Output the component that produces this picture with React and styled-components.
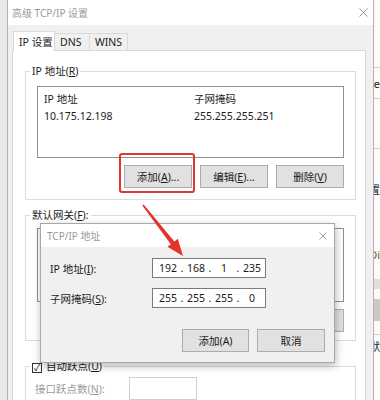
import React from 'react';
import styled, { createGlobalStyle } from 'styled-components';

const GlobalStyle = createGlobalStyle`
  body {
    margin: 0;
    background: #fff;
    font-family: 'Noto Sans', 'Noto Sans CJK SC', sans-serif;
    font-size: 10.5px;
    color: #1b1b1b;
  }
  * { box-sizing: border-box; }
`;

const Page = styled.div`
  position: relative;
  display: flex;
  width: 380px;
  height: 400px;
  overflow: hidden;
  background: #fff;
`;

const LeftEdge = styled.div`
  width: 7px;
  flex-shrink: 0;
  background: #e8e8e8;
`;

const Window = styled.div`
  width: 367px;
  flex-shrink: 0;
  display: flex;
  flex-direction: column;
  border-left: 1px solid #b4b4b4;
  border-right: 1px solid #b4b4b4;
`;

const TitleBar = styled.div`
  height: 25px;
  flex-shrink: 0;
  display: flex;
  align-items: center;
  justify-content: space-between;
  padding: 0 5px 0 4px;
  background: #fff;
  color: #9a9a9a;
  font-size: 10px;
`;

const WinBody = styled.div`
  flex: 1;
  background: #f0f0f0;
  padding: 6px 7px 0 4px;
`;

const Tabs = styled.div`
  display: flex;
  align-items: flex-end;
  padding-left: 1px;
  height: 19px;
`;

const Tab = styled.div`
  width: ${(p) => p.$w}px;
  height: ${(p) => (p.$active ? 20 : 17)}px;
  margin-bottom: ${(p) => (p.$active ? -1 : 0)}px;
  position: relative;
  z-index: ${(p) => (p.$active ? 1 : 0)};
  display: flex;
  align-items: center;
  padding-left: 5px;
  background: ${(p) => (p.$active ? '#fff' : '#f0f0f0')};
  border: 1px solid #d9d9d9;
  border-bottom: none;
  margin-left: ${(p) => (p.$active ? 0 : -1)}px;
`;

const TabPanel = styled.div`
  background: #fff;
  border: 1px solid #d9d9d9;
  padding: 13px 9px 0 12px;
  height: 360px;
`;

const Group = styled.fieldset`
  margin: ${(p) => p.$mt || 0}px 0 0 0;
  padding: ${(p) => p.$pt || 7}px 11px ${(p) => p.$pb || 8}px 11px;
  border: 1px solid #dcdcdc;
  min-width: 0;
`;

const Legend = styled.legend`
  margin-left: -7px;
  padding: 0 2px;
  line-height: 14px;
`;

const ListBox = styled.div`
  height: ${(p) => p.$h}px;
  border: 1px solid #8f8f8f;
  background: #fff;
  padding: 2px 0 0 6px;
`;

const ListRow = styled.div`
  display: grid;
  grid-template-columns: 150px 1fr;
  height: 18px;
  align-items: center;
`;

const ButtonRow = styled.div`
  display: flex;
  justify-content: flex-end;
  gap: 8px;
  margin-top: 7px;
`;

const Btn = styled.div`
  width: ${(p) => p.$w || 68}px;
  height: 23px;
  display: flex;
  align-items: center;
  justify-content: center;
  background: #e1e1e1;
  border: 1px solid #adadad;
  color: #1b1b1b;
`;

const Highlight = styled.div`
  position: relative;
  &::after {
    content: '';
    position: absolute;
    left: -5px;
    right: -3px;
    top: -12px;
    bottom: -5px;
    border: 2.5px solid #e0362b;
    border-radius: 3px;
  }
`;

const Check = styled.span`
  width: 10px;
  height: 10px;
  margin-right: 4px;
  border: 1px solid #333;
  display: inline-flex;
  align-items: center;
  justify-content: center;
  vertical-align: -1px;
  font-size: 9px;
  line-height: 1;
`;

const MetricRow = styled.div`
  display: flex;
  align-items: center;
  gap: 14px;
  margin-left: -2px;
`;

const Dim = styled.span`
  color: #9b9b9b;
  width: 80px;
`;

const SmallInput = styled.div`
  width: 68px;
  height: 23px;
  border: 1px solid #cfcfcf;
  background: #fff;
`;

const BackStrip = styled.div`
  flex: 1;
  display: flex;
  flex-direction: column;
  background: #fafafa;
  overflow: hidden;
  font-size: 11px;
  white-space: nowrap;
`;

const StripCell = styled.div`
  height: ${(p) => p.$h}px;
  flex-shrink: 0;
  border-bottom: ${(p) => (p.$line ? '1px solid #cfcfcf' : 'none')};
  background: ${(p) => p.$bg || 'transparent'};
  display: flex;
  align-items: center;
  justify-content: flex-end;
  color: ${(p) => p.$color || '#222'};
`;

const Arrow = styled.svg`
  position: absolute;
  left: 0;
  top: 0;
  pointer-events: none;
`;

const Dialog = styled.div`
  position: absolute;
  left: 40px;
  top: 223px;
  width: 295px;
  height: 140px;
  border: 1px solid #a8a8a8;
  background: #f0f0f0;
  box-shadow: 1px 3px 8px rgba(0, 0, 0, 0.28);
  display: flex;
  flex-direction: column;
`;

const DialogTitle = styled.div`
  height: 23px;
  background: #fff;
  display: flex;
  align-items: center;
  justify-content: space-between;
  padding: 0 7px 0 6px;
  color: #9a9a9a;
  font-size: 10px;
`;

const DialogBody = styled.div`
  padding: 11px 9px 0 9px;
  display: flex;
  flex-direction: column;
  gap: 10px;
`;

const FieldRow = styled.div`
  display: grid;
  grid-template-columns: 102px 114px;
  align-items: center;
`;

const IpBox = styled.div`
  height: 20px;
  border: 1px solid #7a7a7a;
  background: #fff;
  display: flex;
  align-items: center;
  padding-left: 4px;
`;

const IpPart = styled.span`
  width: 22px;
  text-align: center;
`;

const IpDot = styled.span`
  width: 6px;
  text-align: center;
`;

const DialogButtons = styled.div`
  display: flex;
  justify-content: flex-end;
  gap: 8px;
  margin-top: 11px;
`;

function CloseIcon({ size = 9 }) {
  return (
    <svg width={size} height={size} viewBox="0 0 9 9">
      <path d="M0.5 0.5 L8.5 8.5 M8.5 0.5 L0.5 8.5" stroke="#8a8a8a" strokeWidth="0.9" fill="none" />
    </svg>
  );
}

function IpField({ parts }) {
  return (
    <IpBox>
      {parts.map((p, i) => (
        <React.Fragment key={i}>
          <IpPart>{p}</IpPart>
          {i < 3 && <IpDot>.</IpDot>}
        </React.Fragment>
      ))}
    </IpBox>
  );
}

export default function App() {
  return (
    <>
      <GlobalStyle />
      <Page>
        <LeftEdge />
        <Window>
          <TitleBar>
            <span>高级 TCP/IP 设置</span>
            <CloseIcon />
          </TitleBar>
          <WinBody>
            <Tabs>
              <Tab $active $w={42}>IP 设置</Tab>
              <Tab $w={36}>DNS</Tab>
              <Tab $w={39}>WINS</Tab>
            </Tabs>
            <TabPanel>
              <Group $pt={8} $pb={11}>
                <Legend>IP 地址(<u>R</u>)</Legend>
                <ListBox $h={72}>
                  <ListRow><span>IP 地址</span><span>子网掩码</span></ListRow>
                  <ListRow><span>10.175.12.198</span><span>255.255.255.251</span></ListRow>
                </ListBox>
                <ButtonRow>
                  <Highlight><Btn>添加(<u>A</u>)...</Btn></Highlight>
                  <Btn>编辑(<u>E</u>)...</Btn>
                  <Btn>删除(<u>V</u>)</Btn>
                </ButtonRow>
              </Group>
              <Group $mt={8} $pt={6} $pb={8}>
                <Legend>默认网关(<u>F</u>):</Legend>
                <ListBox $h={74} />
                <ButtonRow>
                  <Btn>添加(D)...</Btn>
                  <Btn>编辑(T)...</Btn>
                  <Btn>删除(M)</Btn>
                </ButtonRow>
              </Group>
              <Group $mt={18} $pt={4}>
                <Legend><Check>✓</Check>自动跃点(<u>U</u>)</Legend>
                <MetricRow>
                  <Dim>接口跃点数(<u>N</u>):</Dim>
                  <SmallInput />
                </MetricRow>
              </Group>
            </TabPanel>
          </WinBody>
        </Window>
        <BackStrip>
          <StripCell $h={68} $line />
          <StripCell $h={31} $line>re</StripCell>
          <StripCell $h={50} $line />
          <StripCell $h={80}>置</StripCell>
          <StripCell $h={50} $color="#6b5a20">Di</StripCell>
          <StripCell $h={10} $bg="#dedede" />
          <StripCell $h={10} />
          <StripCell $h={22} $bg="#c9c9c9" />
          <StripCell $h={14} $line />
          <StripCell $h={22}>默</StripCell>
        </BackStrip>

        <Dialog>
          <DialogTitle>
            <span>TCP/IP 地址</span>
            <CloseIcon size={8} />
          </DialogTitle>
          <DialogBody>
            <FieldRow>
              <span>IP 地址(<u>I</u>):</span>
              <IpField parts={['192', '168', '1', '235']} />
            </FieldRow>
            <FieldRow>
              <span>子网掩码(<u>S</u>):</span>
              <IpField parts={['255', '255', '255', '0']} />
            </FieldRow>
            <DialogButtons>
              <Btn $w={67}>添加(A)</Btn>
              <Btn>取消</Btn>
            </DialogButtons>
          </DialogBody>
        </Dialog>

        <Arrow width="380" height="400" viewBox="0 0 380 400">
          <polygon
            points="142.3,205.6 143.7,204.4 174.4,241.5 177.8,238.8 183,256 167.4,246.8 170.8,244.2"
            fill="#e4332a"
          />
        </Arrow>
      </Page>
    </>
  );
}
